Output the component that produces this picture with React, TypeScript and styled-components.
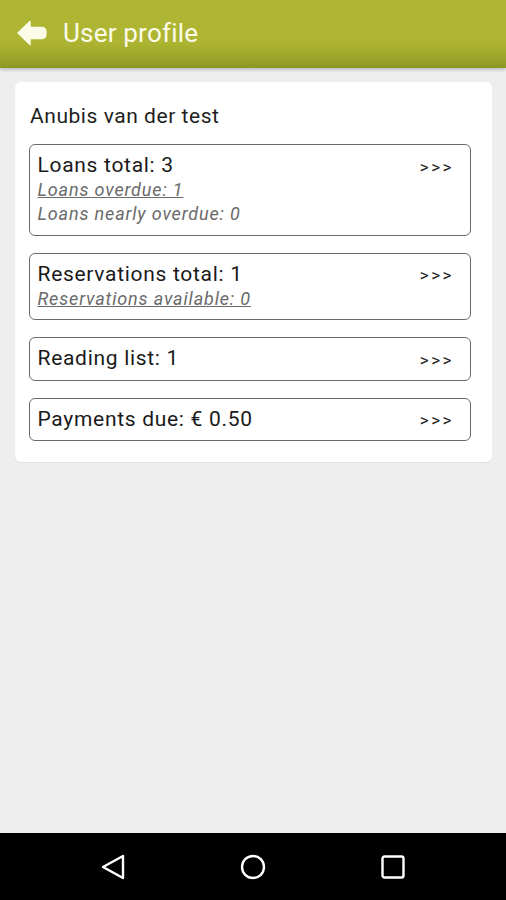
import styled, { createGlobalStyle } from "styled-components";

const GlobalStyle = createGlobalStyle`
  html, body {
    margin: 0;
    padding: 0;
    height: 100%;
    background: #eeeeee;
    font-family: Roboto, "Liberation Sans", sans-serif;
  }
  #root {
    height: 100%;
  }
`;

type Item = {
  title: string;
  subs: { text: string; link?: boolean }[];
};

const items: Item[] = [
  {
    title: "Loans total: 3",
    subs: [
      { text: "Loans overdue: 1", link: true },
      { text: "Loans nearly overdue: 0" },
    ],
  },
  {
    title: "Reservations total: 1",
    subs: [{ text: "Reservations available: 0", link: true }],
  },
  { title: "Reading list: 1", subs: [] },
  { title: "Payments due: € 0.50", subs: [] },
];

const BackArrow = () => (
  <svg width="30" height="26" viewBox="0 0 30 26">
    <path
      d="M1 13 L13 1.5 L13 7.5 L25 7.5 Q29 7.5 29 13 Q29 18.5 25 18.5 L13 18.5 L13 24.5 Z"
      fill="#fbfbe8"
      strokeLinejoin="round"
      stroke="#fbfbe8"
      strokeWidth="1.5"
    />
  </svg>
);

const App = () => {
  return (
    <Page>
      <GlobalStyle />
      <Header>
        <BackArrow />
        <Title>User profile</Title>
      </Header>
      <Content>
        <Card>
          <Name>Anubis van der test</Name>
          <List>
            {items.map((item) => (
              <Box key={item.title}>
                <MainRow>
                  <MainText>{item.title}</MainText>
                  <More>&gt;&gt;&gt;</More>
                </MainRow>
                {item.subs.map((s) => (
                  <SubText key={s.text} $link={s.link}>
                    {s.text}
                  </SubText>
                ))}
              </Box>
            ))}
          </List>
        </Card>
      </Content>
      <NavBar>
        <svg width="28" height="28" viewBox="0 0 28 28">
          <path
            d="M24 3 L24 25 L4 14 Z"
            fill="none"
            stroke="#fff"
            strokeWidth="2.4"
            strokeLinejoin="round"
          />
        </svg>
        <svg width="28" height="28" viewBox="0 0 28 28">
          <circle cx="14" cy="14" r="11" fill="none" stroke="#fff" strokeWidth="2.4" />
        </svg>
        <svg width="28" height="28" viewBox="0 0 28 28">
          <rect
            x="3.5"
            y="3.5"
            width="21"
            height="21"
            rx="2"
            fill="none"
            stroke="#fff"
            strokeWidth="2.4"
          />
        </svg>
      </NavBar>
    </Page>
  );
};

const Page = styled.div`
  height: 900px;
  display: flex;
  flex-direction: column;
  background: #eeeeee;
`;

const Header = styled.div`
  height: 68px;
  flex-shrink: 0;
  display: flex;
  align-items: center;
  gap: 16px;
  padding-left: 17px;
  padding-bottom: 2px;
  box-sizing: border-box;
  background: linear-gradient(
    to bottom,
    #aeb532 0%,
    #aeb532 62%,
    #9ca52b 85%,
    #8c9624 100%
  );
  box-shadow: 0 2px 3px rgba(0, 0, 0, 0.2);
  position: relative;
  z-index: 1;
`;

const Title = styled.div`
  color: #fbfbe8;
  font-size: 26px;
  letter-spacing: 0.2px;
`;

const Content = styled.div`
  flex: 1;
  padding: 14px 14px 0 15px;
`;

const Card = styled.div`
  background: #ffffff;
  border-radius: 6px;
  padding: 20px 21px 21px 14px;
  box-shadow: 0 1px 1px rgba(0, 0, 0, 0.06);
`;

const Name = styled.div`
  font-size: 21px;
  letter-spacing: 0.55px;
  color: #1e1e1e;
  padding-left: 1px;
  line-height: 28px;
  margin-bottom: 14px;
`;

const List = styled.div`
  display: flex;
  flex-direction: column;
  gap: 17px;
`;

const Box = styled.div`
  border: 1.5px solid #6a6a6a;
  border-radius: 6px;
  padding: 8px 16px 8.5px 7.5px;
`;

const MainRow = styled.div`
  display: flex;
  justify-content: space-between;
  align-items: center;
`;

const MainText = styled.div`
  font-size: 21px;
  letter-spacing: 0.7px;
  line-height: 25px;
  color: #1a1a1a;
`;

const More = styled.div`
  font-size: 17px;
  color: #222;
  letter-spacing: 2.5px;
  padding-top: 2px;
`;

const SubText = styled.div<{ $link?: boolean }>`
  font-size: 18px;
  letter-spacing: 0.85px;
  line-height: 24px;
  font-style: italic;
  color: #6a6a6a;
  text-decoration: ${(p) => (p.$link ? "underline" : "none")};
`;

const NavBar = styled.div`
  height: 67px;
  flex-shrink: 0;
  background: #000;
  display: flex;
  align-items: center;
  justify-content: center;
  gap: 112px;
`;

export default App;
